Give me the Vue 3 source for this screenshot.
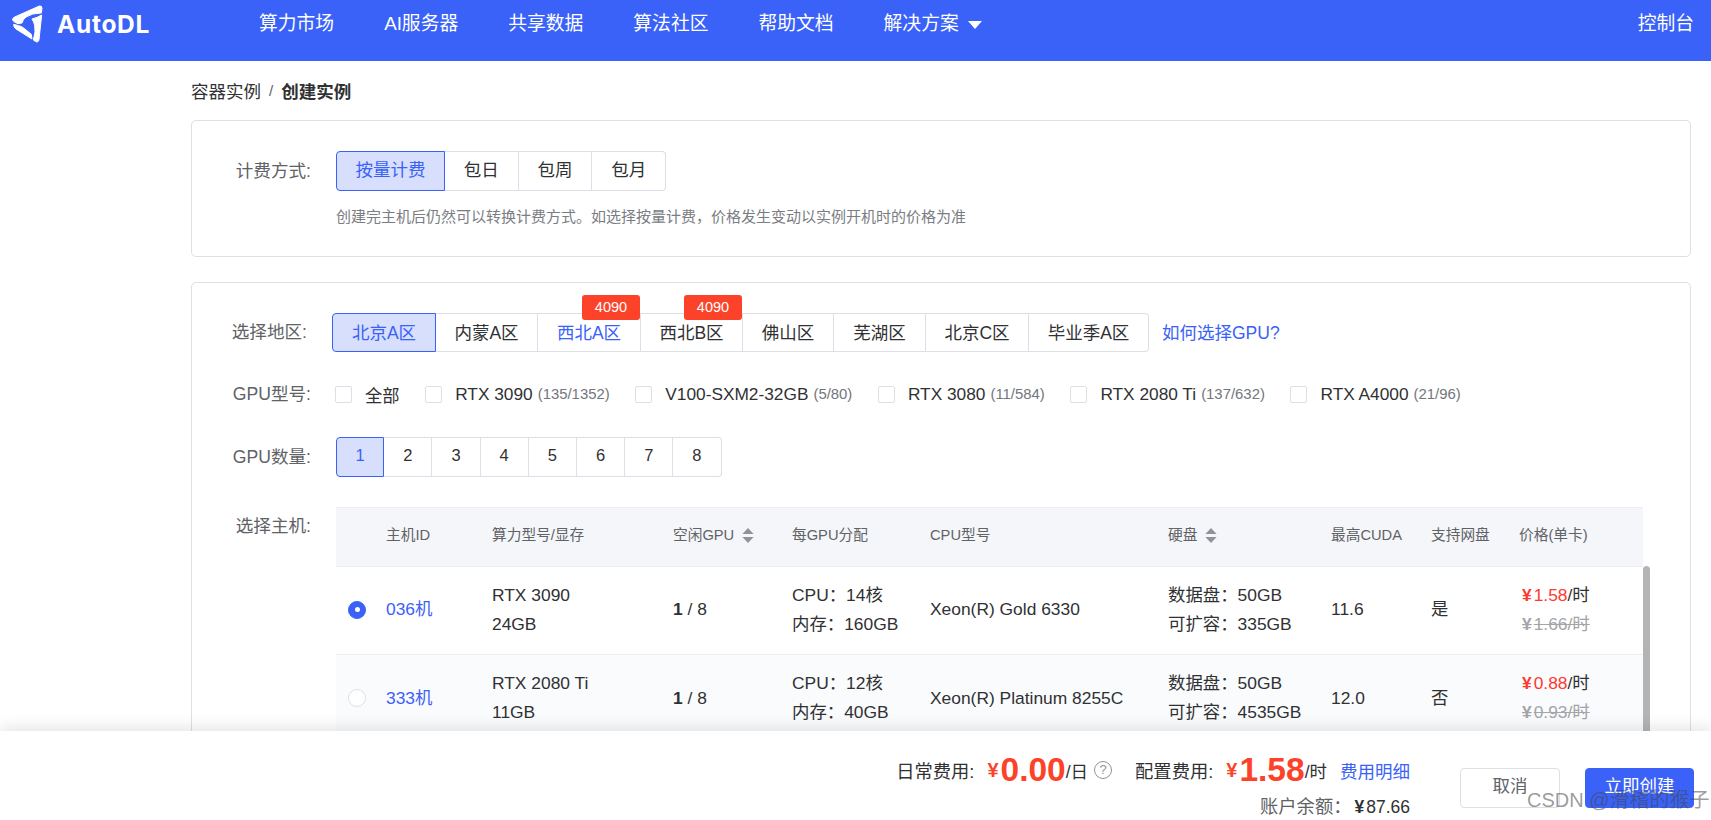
<script setup>
const navItems = ['算力市场', 'AI服务器', '共享数据', '算法社区', '帮助文档']
const billing = ['按量计费', '包日', '包周', '包月']
const regions = [
  { name: '北京A区', w: 104, active: true },
  { name: '内蒙A区', w: 102 },
  { name: '西北A区', w: 103, badge: '4090', link: true },
  { name: '西北B区', w: 102, badge: '4090' },
  { name: '佛山区', w: 91 },
  { name: '芜湖区', w: 92 },
  { name: '北京C区', w: 103 },
  { name: '毕业季A区', w: 120 },
]
const gpus = [
  { name: '全部' },
  { name: 'RTX 3090', count: '(135/1352)' },
  { name: 'V100-SXM2-32GB', count: '(5/80)' },
  { name: 'RTX 3080', count: '(11/584)' },
  { name: 'RTX 2080 Ti', count: '(137/632)' },
  { name: 'RTX A4000', count: '(21/96)' },
]
const counts = [1, 2, 3, 4, 5, 6, 7, 8]
const columns = [
  { t: '', w: 50 }, { t: '主机ID', w: 106 }, { t: '算力型号/显存', w: 181 },
  { t: '空闲GPU', w: 119, sort: true }, { t: '每GPU分配', w: 138 }, { t: 'CPU型号', w: 238 },
  { t: '硬盘', w: 163, sort: true }, { t: '最高CUDA', w: 100 }, { t: '支持网盘', w: 88 }, { t: '价格(单卡)', w: 124 },
]
const hosts = [
  { id: '036机', selected: true, gpu: 'RTX 3090', mem: '24GB', cpu: '14核', ram: '160GB', model: 'Xeon(R) Gold 6330', disk: '50GB', ext: '335GB', cuda: '11.6', net: '是', price: '1.58', old: '1.66' },
  { id: '333机', gpu: 'RTX 2080 Ti', mem: '11GB', cpu: '12核', ram: '40GB', model: 'Xeon(R) Platinum 8255C', disk: '50GB', ext: '4535GB', cuda: '12.0', net: '否', price: '0.88', old: '0.93' },
]
</script>

<template>
  <div class="page">
    <header class="topbar">
      <div class="brand">
        <svg class="logo" viewBox="0 0 150 138" aria-hidden="true">
          <path d="M26 58 Q24 52 32 48 L106 15 Q114 13 114 22 L112 36 Q84 36 66 48 Q56 56 54 66 L42 68 Q30 64 26 58 Z" fill="#fff" stroke="#fff" stroke-width="3" stroke-linejoin="round" />
          <path d="M84 54 Q100 50 113 42 L105 116 Q103 126 94 121 L88 117 Q96 90 92 74 Q90 62 84 54 Z" fill="#fff" stroke="#fff" stroke-width="3" stroke-linejoin="round" />
          <path d="M29 70 L44 74 Q54 76 60 82 L82 100 L84 114 L36 84 Q28 78 29 70 Z" fill="#fff" stroke="#fff" stroke-width="3" stroke-linejoin="round" />
        </svg>
        <span class="wordmark">AutoDL</span>
      </div>
      <nav class="nav">
        <a v-for="item in navItems" :key="item">{{ item }}</a>
        <a class="nav-more">解决方案<i class="caret"></i></a>
      </nav>
      <a class="console">控制台</a>
    </header>

    <main class="content">
      <div class="crumb"><span>容器实例</span><span class="sep">/</span><b>创建实例</b></div>

      <section class="card card-billing">
        <div class="row">
          <label class="label">计费方式:</label>
          <div class="seg">
            <button v-for="(b, i) in billing" :key="b" class="seg-item" :class="{ active: i === 0, wide: i === 0 }">{{ b }}</button>
          </div>
        </div>
        <p class="hint">创建完主机后仍然可以转换计费方式。如选择按量计费，价格发生变动以实例开机时的价格为准</p>
      </section>

      <section class="card card-main">
        <div class="row row-region">
          <label class="label">选择地区:</label>
          <div class="seg seg-region">
            <button v-for="(r, i) in regions" :key="r.name" class="seg-item" :class="{ active: r.active, link: r.link }" :style="{ width: r.w + 'px' }">
              {{ r.name }}<span v-if="r.badge" class="badge">{{ r.badge }}</span>
            </button>
          </div>
          <a class="help">如何选择GPU?</a>
        </div>

        <div class="row row-gpu">
          <label class="label">GPU型号:</label>
          <div class="checks">
            <span v-for="g in gpus" :key="g.name" class="check">
              <i class="box"></i>
              <span>{{ g.name }}</span>
              <small v-if="g.count">{{ g.count }}</small>
            </span>
          </div>
        </div>

        <div class="row row-count">
          <label class="label">GPU数量:</label>
          <div class="seg">
            <button v-for="n in counts" :key="n" class="seg-item num" :class="{ active: n === 1 }">{{ n }}</button>
          </div>
        </div>

        <div class="row row-host">
          <label class="label">选择主机:</label>
          <div class="table-wrap">
            <table class="hosts">
              <colgroup><col v-for="(c, i) in columns" :key="i" :style="{ width: c.w + 'px' }" /></colgroup>
              <thead>
                <tr>
                  <th v-for="(c, i) in columns" :key="i">
                    {{ c.t }}
                    <svg v-if="c.sort" class="sort" viewBox="0 0 12 16" aria-hidden="true">
                      <path d="M6 0 L12 6.5 H0 Z M0 9.5 H12 L6 16 Z" fill="#909399" />
                    </svg>
                  </th>
                </tr>
              </thead>
              <tbody>
                <tr v-for="h in hosts" :key="h.id" :class="{ alt: !h.selected }">
                  <td><i class="radio" :class="{ on: h.selected }"></i></td>
                  <td class="host-id">{{ h.id }}</td>
                  <td>{{ h.gpu }}<br />{{ h.mem }}</td>
                  <td><b>1</b> / 8</td>
                  <td>CPU：{{ h.cpu }}<br />内存：{{ h.ram }}</td>
                  <td>{{ h.model }}</td>
                  <td>数据盘：{{ h.disk }}<br />可扩容：{{ h.ext }}</td>
                  <td>{{ h.cuda }}</td>
                  <td>{{ h.net }}</td>
                  <td>
                    <span class="price"><em>¥</em>{{ h.price }}</span>/时<br />
                    <s class="old"><em>¥</em>{{ h.old }}/时</s>
                  </td>
                </tr>
              </tbody>
            </table>
            <div class="scrollbar"></div>
          </div>
        </div>
      </section>
    </main>

    <footer class="footer">
      <div class="summary">
        <div class="fees">
          <span class="fee-label">日常费用:</span>
          <span class="yen">¥</span><span class="amount">0.00</span><span>/日</span>
          <i class="qmark">?</i>
          <span class="fee-label fee2">配置费用:</span>
          <span class="yen">¥</span><span class="amount">1.58</span><span>/时</span>
          <a class="detail">费用明细</a>
        </div>
        <div class="balance"><span class="fee-label">账户余额：</span><span class="bal-num"><em>¥</em>87.66</span></div>
      </div>
      <button class="btn">取消</button>
      <button class="btn primary">立即创建</button>
      <span class="watermark">CSDN @滑稽的猴子</span>
    </footer>
  </div>
</template>

<style>
html, body { margin: 0; height: 100%; overflow: hidden; background: #fff; }
</style>

<style scoped>
.page {
  height: 820px;
  overflow: hidden;
  font-family: "Liberation Sans", "Noto Sans CJK SC", sans-serif;
  font-size: 17.5px;
  color: #303133;
  position: relative;
}
.topbar {
  height: 61px;
  background: #3a62f8;
  color: #fff;
  display: flex;
  align-items: flex-start;
  padding: 0 17px 0 9px;
  box-sizing: border-box;
}
.brand { display: flex; align-items: center; height: 48px; width: 250px; flex: none; }
.logo { width: 50px; height: 46px; margin-left: -5px; flex: none; }
.wordmark {
  font-family: Inter, "Liberation Sans", sans-serif;
  font-weight: 700;
  font-size: 24.5px;
  margin-left: 3px;
  letter-spacing: 0.7px;
}
.nav { display: flex; gap: 50px; line-height: 48px; font-size: 18.8px; }
.nav-more { display: flex; align-items: center; }
.caret {
  width: 0; height: 0; margin-left: 9px; margin-top: 2px;
  border-left: 7.5px solid transparent;
  border-right: 7.5px solid transparent;
  border-top: 8px solid #fff;
}
.console { margin-left: auto; line-height: 48px; font-size: 18.8px; }
.content { padding: 0 20px 0 191px; }
.crumb { height: 59px; display: flex; align-items: center; font-size: 17.5px; color: #303133; }
.sep { margin: 0 8px; color: #606266; font-size: 15px; }
.crumb b { font-weight: 700; }
.card {
  border: 1px solid #dcdfe6;
  border-radius: 5px;
  box-sizing: border-box;
  background: #fff;
}
.card-billing { height: 137px; padding-top: 30px; margin-bottom: 25px; }
.card-main { padding-top: 30px; height: 600px; }
.row { display: flex; align-items: center; }
.label { width: 119px; margin-right: 25px; padding-bottom: 4px; text-align: right; color: #606266; font-size: 17.6px; flex: none; }
.seg { display: flex; }
.seg-item {
  font: inherit;
  font-size: 17.5px;
  height: 40px;
  width: 73.7px;
  padding: 0 0 5px;
  background: #fff;
  color: #303133;
  border: 1px solid #dcdfe6;
  border-left-width: 0;
  position: relative;
  box-sizing: border-box;
}
.seg-item:first-child { border-left-width: 1px; border-radius: 4px 0 0 4px; }
.seg-item:last-child { border-radius: 0 4px 4px 0; }
.seg-item.wide { width: 109px; }
.seg-item.active {
  background: #d7dffc;
  color: #3a62f8;
  border: 1px solid #3a62f8;
}
.seg-item.link { color: #3a62f8; }
.seg-item.num { width: 48.2px; font-size: 16.5px; padding-bottom: 3px; }
.hint { margin: 16px 0 0 144px; font-size: 15px; line-height: 20px; color: #7a7d83; }
.row-region { height: 39px; }
.row-region .label { width: 115px; margin-right: 25px; }
.seg-region .seg-item { height: 39px; padding-bottom: 2px; }
.badge {
  position: absolute;
  right: 0;
  top: -19px;
  width: 58px;
  height: 25px;
  line-height: 25px;
  border-radius: 3px;
  background: #fc4229;
  color: #fff;
  font-size: 14.5px;
  text-align: center;
}
.help { margin-left: 13px; color: #3a62f8; font-size: 17.5px; padding-bottom: 2px; }
.row-gpu { height: 40px; margin-top: 22px; }
.checks { display: flex; gap: 25.6px; margin-left: -1px; }
.check { display: flex; align-items: center; color: #303133; font-size: 17.3px; white-space: nowrap; }
.box {
  width: 15px; height: 15px;
  border: 1px solid #dcdfe6;
  border-radius: 2px;
  margin-right: 13px;
  flex: none;
}
.check small { font-size: 14.9px; color: #73767c; margin-left: 5px; }
.row-count { margin-top: 23px; }
.row-host { margin-top: 30px; align-items: flex-start; }
.row-host > .label { margin-top: 5px; }
.table-wrap { position: relative; width: 1307px; flex: none; }
.hosts { border-collapse: collapse; table-layout: fixed; width: 1307px; }
.hosts th {
  height: 58.5px;
  background: #f5f6fa;
  font-size: 14.7px;
  font-weight: 400;
  color: #606266;
  text-align: left;
  padding: 0 0 6px;
  border-top: 1px solid #ebeef5;
  border-bottom: 1px solid #ebeef5;
  box-sizing: border-box;
}
.hosts td {
  height: 88.5px;
  padding: 0 0 1px;
  font-size: 17.4px;
  line-height: 29px;
  color: #303133;
  border-bottom: 1px solid #ebeef5;
  box-sizing: border-box;
  white-space: nowrap;
}
.hosts tr.alt td { background: #fafbfd; }
.sort { width: 12px; height: 15px; vertical-align: -3px; margin-left: 4px; }
.radio {
  display: block;
  width: 18px; height: 18px;
  box-sizing: border-box;
  border: 1px solid #dcdfe6;
  border-radius: 50%;
  background: #fff;
  margin-left: 12px;
}
.radio.on { background: #3a62f8; border-color: #3a62f8; position: relative; }
.radio.on::after {
  content: "";
  position: absolute;
  left: 5.5px; top: 5.5px;
  width: 5px; height: 5px;
  border-radius: 50%;
  background: #fff;
}
.host-id { color: #3a62f8 !important; }
.price { color: #fc3a2e; }
em { font-style: normal; font-weight: 700; margin: 0 2px 0 3px; }
.old { color: #a3a5a9; }
.scrollbar {
  position: absolute;
  left: 1307px;
  top: 59px;
  width: 7px;
  height: 200px;
  background: #b4b4b4;
  border-radius: 4px 4px 0 0;
}
.footer {
  position: absolute;
  left: 0; right: 0; bottom: 0;
  height: 89px;
  background: #fff;
  box-shadow: 0 -4px 14px rgba(0, 0, 0, 0.1);
  display: flex;
  justify-content: flex-end;
  padding: 37px 17px 0 0;
  box-sizing: border-box;
}
.summary { margin-right: 50px; text-align: right; }
.fees { display: flex; align-items: center; height: 32px; margin-top: -14px; color: #303133; font-size: 17.5px; }
.fee-label { font-size: 18.3px; }
.yen { color: #fc4229; font-weight: 700; font-size: 20px; margin-left: 13px; margin-right: 2px; }
.amount { color: #fc4229; font-weight: 700; font-size: 33.5px; }
.qmark {
  width: 16px; height: 16px;
  border: 1.5px solid #909399;
  border-radius: 50%;
  color: #909399;
  font-style: normal;
  font-size: 13px;
  line-height: 16px;
  text-align: center;
  margin-left: 6px;
}
.fee2 { margin-left: 23px; }
.detail { color: #3a62f8; margin-left: 13px; }
.balance { color: #606266; margin-top: 9px; font-size: 17.5px; line-height: 24px; }
.bal-num { color: #303133; }
.btn {
  font: inherit;
  font-size: 17.5px;
  width: 100px;
  height: 40px;
  background: #fff;
  color: #606266;
  border: 1px solid #dcdfe6;
  border-radius: 4px;
  padding: 0 0 7px;
}
.btn.primary { width: 109px; margin-left: 25px; background: #3a62f8; border-color: #3a62f8; color: #fff; }
.watermark {
  position: absolute;
  left: 1527px;
  top: 57px;
  font-size: 20px;
  line-height: 24px;
  color: rgba(70, 70, 70, 0.55);
  white-space: nowrap;
}
</style>
